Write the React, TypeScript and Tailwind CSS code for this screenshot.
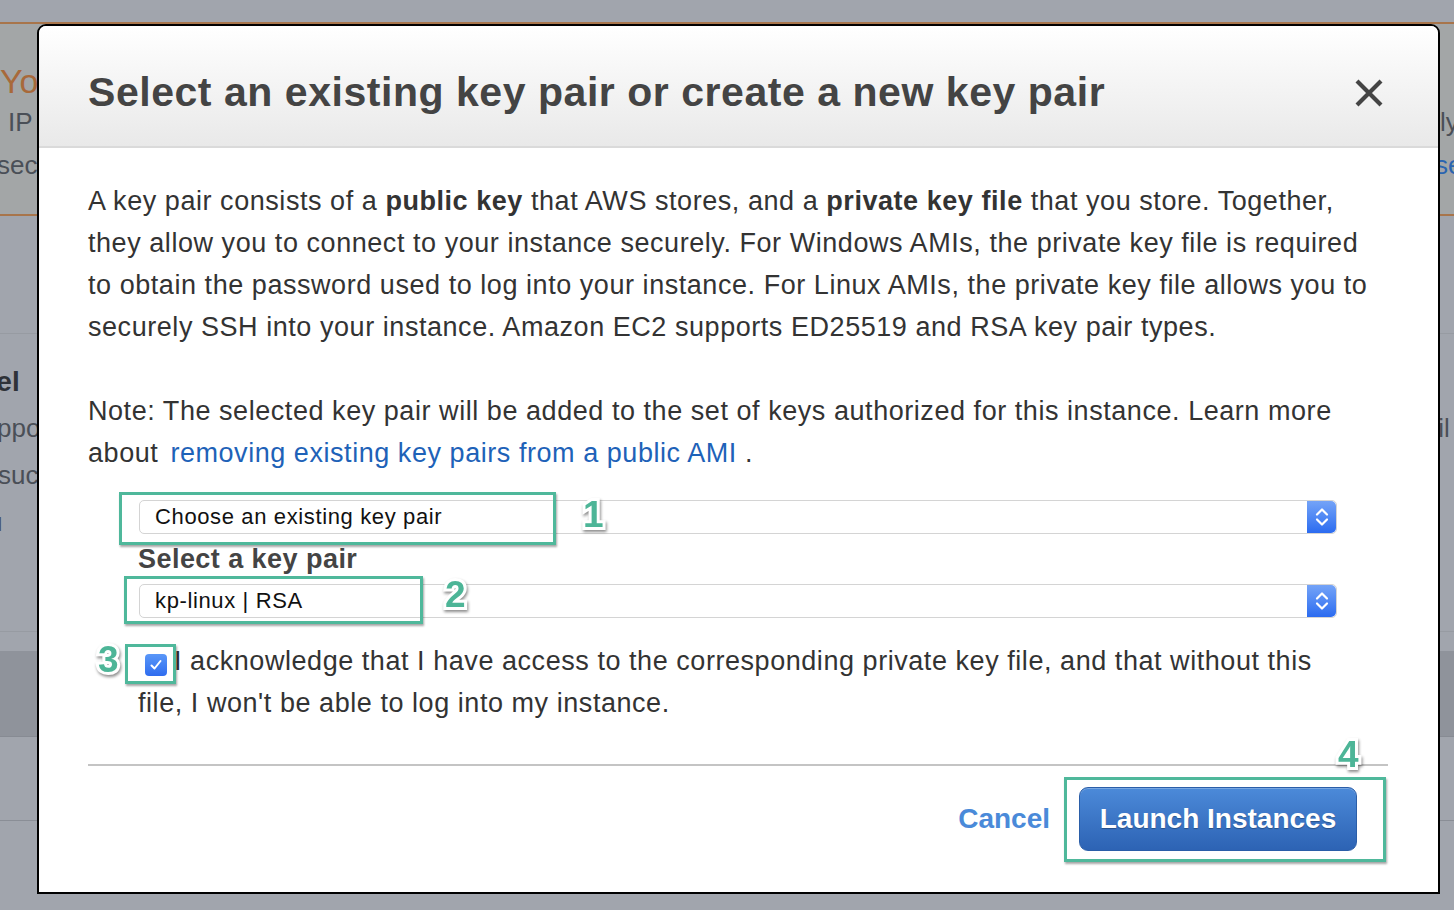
import React from "react";

const font = { fontFamily: '"Liberation Sans", Arial, sans-serif' };

function Badge({ n }: { n: string }) {
  return (
    <span className="block font-bold text-[37px] leading-none text-[#4db597] [-webkit-text-stroke:6px_white] [paint-order:stroke_fill] [filter:drop-shadow(1px_2px_1.5px_rgba(0,0,0,0.45))]">
      {n}
    </span>
  );
}

function Stepper() {
  return (
    <div className="w-[29px] h-full rounded-r-[5px] bg-gradient-to-b from-[#74a3f7] to-[#2b6bf0] flex items-center justify-center">
      <svg width="16" height="24" viewBox="0 0 16 24" fill="none" stroke="white" strokeWidth="2.2" strokeLinecap="round" strokeLinejoin="round">
        <path d="M3 9.5 L8 4.5 L13 9.5" />
        <path d="M3 14.5 L8 19.5 L13 14.5" />
      </svg>
    </div>
  );
}

function Select({ text }: { text: string }) {
  return (
    <div className="flex h-[34px] ml-[51px] mr-[61px] border border-[#d4d4d4] rounded-[5px] bg-white">
      <div className="flex-1 flex items-center pl-[15px] text-[22px] text-[#111] tracking-[0.63px]">{text}</div>
      <Stepper />
    </div>
  );
}

const box = "absolute border-[3px] border-[#4fb89b] shadow-[1px_2px_2px_rgba(0,0,0,0.35)]";

export default function App() {
  return (
    <div className="relative w-[1454px] h-[910px] overflow-hidden bg-[#a1a5ad] text-[#4a4f57]" style={font}>
      {/* background page */}
      <div className="h-[22px]" />
      <div className="h-[194px] border-t-2 border-b-2 border-[#a8754b] bg-[#a3a6a7] flex flex-col">
        <div className="flex h-[76px] items-end pb-[2px]">
          <div className="w-[1440px] shrink-0 text-[34px] text-[#a8693a] leading-none">Your instances</div>
        </div>
        <div className="flex h-[44px] items-center">
          <div className="w-[1440px] shrink-0 pl-[8px] text-[26px]">IP address</div>
          <div className="text-[26px]">ly</div>
        </div>
        <div className="flex h-[42px] items-center">
          <div className="w-[1440px] shrink-0 -ml-[3px] text-[26px]">security</div>
          <div className="text-[26px] text-[#2a64b0] -ml-[2px]">se</div>
        </div>
      </div>
      <div className="h-[117px]" />
      <div className="border-t border-[#979ba2] h-[298px] flex flex-col">
        <div className="h-[28px]" />
        <div className="text-[28px] font-bold text-[#2e3238] leading-[40px] -ml-[55px]">Panel</div>
        <div className="flex h-[52px] items-center">
          <div className="w-[1440px] shrink-0 text-[26px] -ml-[3px]">pport</div>
          <div className="text-[26px] -ml-[6px]">til</div>
        </div>
        <div className="text-[26px] leading-[42px] -ml-[2px]">such</div>
        <div className="text-[26px] leading-[52px] -ml-[4px]">ı</div>
      </div>
      <div className="border-t border-[#979ba2] h-[20px]" />
      <div className="h-[86px] bg-[#8f939b] border-b border-[#878b93]" />
      <div className="h-[84px] border-b border-[#8a8e96]" />

      {/* modal */}
      <div className="absolute left-[37px] top-[24px] w-[1403px] h-[870px] border-2 border-black rounded-t-[9px] bg-white overflow-hidden flex flex-col">
        <div className="h-[122px] shrink-0 bg-gradient-to-b from-white to-[#e9e9e9] border-b-2 border-[#dadada] flex items-center justify-between pl-[49px] pr-[54px]">
          <h1 className="text-[41px] font-bold text-[#444] tracking-[0.54px] pt-[14px] whitespace-nowrap">Select an existing key pair or create a new key pair</h1>
          <svg width="30" height="30" viewBox="0 0 30 30" className="mt-[14px]">
            <path d="M3 3 L27 27 M27 3 L3 27" stroke="#444" strokeWidth="4.2" strokeLinecap="butt" />
          </svg>
        </div>
        <div className="flex-1 pl-[49px] pr-[40px] pt-[32px] text-[27px] tracking-[0.55px] leading-[42px] text-[#333] whitespace-nowrap">
          <p>
            A key pair consists of a <b>public key</b> that AWS stores, and a <b>private key file</b> that you store. Together,
            <br />
            they allow you to connect to your instance securely. For Windows AMIs, the private key file is required
            <br />
            to obtain the password used to log into your instance. For Linux AMIs, the private key file allows you to
            <br />
            securely SSH into your instance. Amazon EC2 supports ED25519 and RSA key pair types.
          </p>
          <p className="mt-[42px]">
            Note: The selected key pair will be added to the set of keys authorized for this instance. Learn more
            <br />
            about <span className="ml-[4px] text-[#1e62b8]">removing existing key pairs from a public AMI</span> .
          </p>

          <div className="relative mt-[26px] tracking-normal">
            <Select text="Choose an existing key pair" />
            <div className={box + " left-[31px] top-[-8px] w-[437px] h-[53px]"} />
            <div className="absolute left-[495px] top-[-4px]"><Badge n="1" /></div>
          </div>
          <div className="h-[50px] flex items-center pl-[50px] text-[27px] tracking-[0.45px] font-bold text-[#444]">Select a key pair</div>
          <div className="relative tracking-normal">
            <Select text="kp-linux | RSA" />
            <div className={box + " left-[36px] top-[-8px] w-[299px] h-[48px]"} />
            <div className="absolute left-[357px] top-[-8px]"><Badge n="2" /></div>
          </div>

          <div className="relative mt-[22px] pl-[50px]">
            <p>
              <span className="inline-flex align-[-2px] ml-[7px] mr-[7px] w-[22px] h-[22px] rounded-[4px] bg-gradient-to-b from-[#5a97f8] to-[#2f6cef] items-center justify-center">
                <svg width="14" height="14" viewBox="0 0 14 14" fill="none" stroke="white" strokeWidth="2" strokeLinecap="round" strokeLinejoin="round">
                  <path d="M2.5 7.5 L5.5 10.5 L11.5 3" />
                </svg>
              </span>
              I acknowledge that I have access to the corresponding private key file, and that without this
              <br />
              file, I won't be able to log into my instance.
            </p>
            <div className={box + " left-[37px] top-[4px] w-[51px] h-[40px]"} />
            <div className="absolute left-[10px] top-[1px]"><Badge n="3" /></div>
          </div>

          <div className="relative mt-[40px] mr-[10px] h-[2px] bg-[#c4c4c4]">
            <div className="absolute left-[1250px] top-[-28px]"><Badge n="4" /></div>
          </div>

          <div className="flex justify-end items-center gap-[29px] pr-[41px] mt-[21px] tracking-normal">
            <span className="text-[28px] font-bold text-[#4a8ad9]">Cancel</span>
            <div className="relative">
              <button className="w-[278px] h-[64px] rounded-[9px] border border-[#2b5ea8] bg-gradient-to-b from-[#4c8ad9] to-[#2d63b4] text-white text-[28px] font-bold [text-shadow:0_1px_1px_rgba(0,0,0,0.3)] shadow-[inset_0_1px_0_rgba(255,255,255,0.25)]" style={font}>
                Launch Instances
              </button>
              <div className={box + " left-[-15px] top-[-10px] w-[322px] h-[85px]"} />
            </div>
          </div>
        </div>
      </div>
    </div>
  );
}
